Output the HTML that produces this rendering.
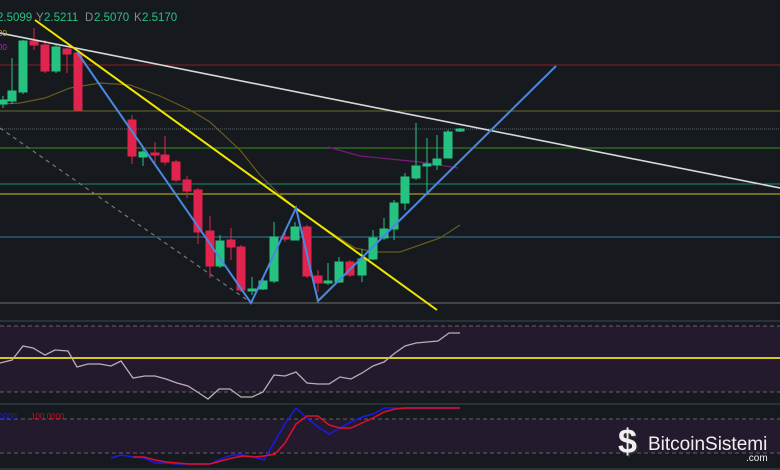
<!DOCTYPE html>
<html><head><meta charset="utf-8"><style>
html,body{margin:0;padding:0;background:#161a1f;width:780px;height:470px;overflow:hidden}
svg{display:block}
text{font-family:"Liberation Sans",sans-serif}
</style></head><body>
<svg width="780" height="470" xmlns="http://www.w3.org/2000/svg">
<rect width="780" height="470" fill="#161a1f"/>
<line x1="0" y1="65" x2="780" y2="65" stroke="#8a1d22" stroke-width="1"/>
<line x1="0" y1="111" x2="780" y2="111" stroke="#6b6b2a" stroke-width="1"/>
<line x1="0" y1="129" x2="780" y2="129" stroke="#5a6a6a" stroke-width="1" stroke-dasharray="1 1"/>
<line x1="0" y1="148" x2="780" y2="148" stroke="#2f7a1f" stroke-width="1.2"/>
<line x1="0" y1="184" x2="780" y2="184" stroke="#1f8a6a" stroke-width="1"/>
<line x1="0" y1="194" x2="780" y2="194" stroke="#c8c020" stroke-width="1"/>
<line x1="0" y1="237" x2="780" y2="237" stroke="#2a6a8a" stroke-width="1.2"/>
<line x1="0" y1="303" x2="780" y2="303" stroke="#707070" stroke-width="1"/>
<line x1="0" y1="128" x2="250" y2="302" stroke="#777" stroke-width="1.2" stroke-dasharray="4 4"/>
<polyline fill="none" stroke="#6b5a1a" stroke-width="1.2" points="0,104 20,103 45,98 70,88 100,83 130,85 160,96 190,110 210,122 240,150 260,175 280,195 300,212 330,232 355,248 375,252 400,252 420,245 440,238 460,225"/>
<polyline fill="none" stroke="#7a1a7a" stroke-width="1.2" points="328,147 360,156 420,162 458,168"/>
<g stroke-width="1">
<g fill="#26c281" stroke="#26c281">
<line x1="3" y1="96" x2="3" y2="108"/><rect x="-1" y="100" width="8" height="4"/>
<line x1="12" y1="58" x2="12" y2="104"/><rect x="8" y="91" width="8" height="10"/>
<line x1="23" y1="40" x2="23" y2="94"/><rect x="19" y="41" width="8" height="51"/>
<line x1="56" y1="45" x2="56" y2="73"/><rect x="52" y="47" width="8" height="24"/>
<line x1="143" y1="148" x2="143" y2="166"/><rect x="139" y="152" width="8" height="5"/>
<line x1="220" y1="235" x2="220" y2="268"/><rect x="216" y="241" width="8" height="25"/>
<line x1="252" y1="277" x2="252" y2="295"/><rect x="248" y="289" width="8" height="2"/>
<line x1="263" y1="278" x2="263" y2="290"/><rect x="259" y="281" width="8" height="8"/>
<line x1="274" y1="222" x2="274" y2="283"/><rect x="270" y="237" width="8" height="44"/>
<line x1="295" y1="222" x2="295" y2="240"/><rect x="291" y="227" width="8" height="13"/>
<line x1="328" y1="263" x2="328" y2="285"/><rect x="324" y="281" width="8" height="2"/>
<line x1="339" y1="257" x2="339" y2="283"/><rect x="335" y="262" width="8" height="20"/>
<line x1="362" y1="249" x2="362" y2="282"/><rect x="358" y="259" width="8" height="16"/>
<line x1="373" y1="230" x2="373" y2="260"/><rect x="369" y="238" width="8" height="21"/>
<line x1="384" y1="218" x2="384" y2="240"/><rect x="380" y="229" width="8" height="9"/>
<line x1="394" y1="200" x2="394" y2="240"/><rect x="390" y="203" width="8" height="26"/>
<line x1="405" y1="173" x2="405" y2="210"/><rect x="401" y="177" width="8" height="26"/>
<line x1="416" y1="123" x2="416" y2="180"/><rect x="412" y="166" width="8" height="12"/>
<line x1="427" y1="138" x2="427" y2="195"/><rect x="423" y="164" width="8" height="2"/>
<line x1="437" y1="135" x2="437" y2="170"/><rect x="433" y="159" width="8" height="6"/>
<line x1="448" y1="130" x2="448" y2="158"/><rect x="444" y="132" width="8" height="26"/>
<line x1="460" y1="128" x2="460" y2="132"/><rect x="456" y="129" width="8" height="2"/>
</g>
<g fill="#e0244e" stroke="#e0244e">
<line x1="34" y1="28" x2="34" y2="50"/><rect x="30" y="41" width="8" height="4"/>
<line x1="45" y1="40" x2="45" y2="73"/><rect x="41" y="45" width="8" height="26"/>
<line x1="67" y1="48" x2="67" y2="73"/><rect x="63" y="49" width="8" height="5"/>
<line x1="78" y1="50" x2="78" y2="111"/><rect x="74" y="53" width="8" height="57"/>
<line x1="132" y1="115" x2="132" y2="164"/><rect x="128" y="120" width="8" height="36"/>
<line x1="155" y1="142" x2="155" y2="166"/><rect x="151" y="153" width="8" height="2"/>
<line x1="165" y1="136" x2="165" y2="165"/><rect x="161" y="155" width="8" height="7"/>
<line x1="176" y1="160" x2="176" y2="182"/><rect x="172" y="162" width="8" height="18"/>
<line x1="187" y1="176" x2="187" y2="198"/><rect x="183" y="180" width="8" height="11"/>
<line x1="198" y1="188" x2="198" y2="244"/><rect x="194" y="190" width="8" height="42"/>
<line x1="210" y1="216" x2="210" y2="278"/><rect x="206" y="231" width="8" height="35"/>
<line x1="231" y1="228" x2="231" y2="260"/><rect x="227" y="240" width="8" height="7"/>
<line x1="241" y1="245" x2="241" y2="292"/><rect x="237" y="247" width="8" height="43"/>
<line x1="285" y1="233" x2="285" y2="242"/><rect x="281" y="237" width="8" height="2"/>
<line x1="307" y1="225" x2="307" y2="278"/><rect x="303" y="227" width="8" height="49"/>
<line x1="318" y1="270" x2="318" y2="292"/><rect x="314" y="276" width="8" height="7"/>
<line x1="350" y1="260" x2="350" y2="277"/><rect x="346" y="262" width="8" height="13"/>
</g>
</g>
<line x1="0" y1="33" x2="780" y2="188" stroke="#d8d8d8" stroke-width="1.6"/>
<line x1="35" y1="20" x2="437" y2="310" stroke="#f0e600" stroke-width="2"/>
<polyline fill="none" stroke="#4a88e0" stroke-width="2" points="77,52 251,303 296,208 318,301 556,66"/>
<text x="-3" y="21" font-size="11.5" fill="#26c281">2.5099</text>
<text x="36" y="21" font-size="11.5" fill="#888">Y</text><text x="44" y="21" font-size="11.5" fill="#26c281">2.5211</text>
<text x="85" y="21" font-size="11.5" fill="#888">D</text><text x="94" y="21" font-size="11.5" fill="#26c281">2.5070</text>
<text x="134" y="21" font-size="11.5" fill="#888">K</text><text x="142" y="21" font-size="11.5" fill="#26c281">2.5170</text>
<text x="-2" y="36" font-size="8" fill="#c8a020">90</text>
<text x="-2" y="50" font-size="8" fill="#c020c0">00</text>
<line x1="0" y1="321" x2="780" y2="321" stroke="#2c3038" stroke-width="2"/>
<rect x="0" y="326" width="780" height="66" fill="#241a2e"/>
<line x1="0" y1="326" x2="780" y2="326" stroke="#6a6070" stroke-dasharray="4 3"/>
<line x1="0" y1="392" x2="780" y2="392" stroke="#6a6070" stroke-dasharray="4 3"/>
<line x1="0" y1="358" x2="780" y2="358" stroke="#d8c81a" stroke-width="2"/>
<polyline fill="none" stroke="#b8b0b8" stroke-width="1.3" points="0,363 12,360 23,346 33,348 45,355 55,350 68,351 77,367 88,364 100,364 111,366 121,361 133,378 145,376 155,376 166,379 177,383 188,386 199,393 208,399 219,389 230,389 241,397 252,397 263,392 274,375 285,376 296,372 307,383 318,384 329,384 340,377 351,379 362,373 373,366 384,362 395,353 405,346 416,343 427,342 438,341 449,333 460,333"/>
<line x1="0" y1="404" x2="780" y2="404" stroke="#2c3038" stroke-width="2"/>
<rect x="0" y="419" width="780" height="34" fill="#241a2e"/>
<line x1="0" y1="419" x2="780" y2="419" stroke="#6a6070" stroke-dasharray="4 3"/>
<line x1="0" y1="453" x2="780" y2="453" stroke="#6a6070" stroke-dasharray="4 3"/>
<text x="-1" y="419" font-size="8" fill="#2020d0">0000</text>
<text x="31" y="419" font-size="8" fill="#c01020">100.0000</text>
<polyline fill="none" stroke="#1a1ae8" stroke-width="1.5" points="111,458 121,455 133,457 144,458 155,463 166,463 177,464 188,464 199,464 210,464 221,459 232,455 243,455 254,457 264,460 275,441 285,424 296,408 307,418 318,427 329,434 340,428 351,422 362,417 373,414 384,408 395,408 405,408 460,408"/>
<polyline fill="none" stroke="#e0102a" stroke-width="1.5" points="133,457 144,457 155,460 166,462 177,463 188,464 199,464 210,464 221,461 232,458 243,456 254,457 264,456 275,454 285,443 296,424 307,416 318,416 329,425 340,428 351,428 362,423 373,418 384,412 395,409 405,408 460,408"/>
<line x1="0" y1="469" x2="780" y2="469" stroke="#2c3038" stroke-width="2"/>
<g transform="translate(618,423)">
<text x="0" y="30" font-size="34" font-weight="bold" fill="#333" transform="translate(1.5,1.5)">$</text>
<text x="0" y="30" font-size="34" font-weight="bold" fill="#f0f0f0">$</text>
<text x="30" y="27" font-size="19" fill="#f0f0f0">BitcoinSistemi</text>
<text x="128" y="38" font-size="10" fill="#f0f0f0">.com</text>
</g>
</svg>
</body></html>
